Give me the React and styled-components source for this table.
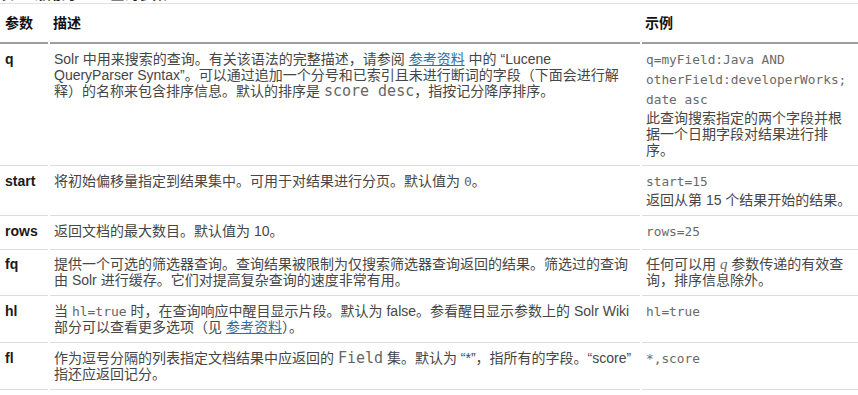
import React from "react";
import styled, { createGlobalStyle } from "styled-components";

const GlobalStyle = createGlobalStyle`
  html, body { margin: 0; padding: 0; background: #fff; }
  body {
    font-family: "Liberation Sans", Arial, "Noto Sans CJK SC", sans-serif;
    font-size: 14px;
    color: #444;
  }
`;

const Page = styled.div`
  width: 858px;
  overflow: hidden;
`;

const Caption = styled.div`
  height: 3px;
  overflow: hidden;
  border-bottom: 1px solid #e2e2e2;
`;

const CaptionText = styled.div`
  margin-top: -14px;
  line-height: 16px;
  font-weight: bold;
  color: #222;
  white-space: nowrap;
`;

const Table = styled.table`
  border-collapse: separate;
  border-spacing: 2px 0;
  table-layout: fixed;
  width: 862px;
  margin: 0 -2px;
`;

const HeadCell = styled.th`
  box-sizing: border-box;
  width: ${(p) => p.$w || "auto"};
  padding: 11px 4px 11px ${(p) => (p.$first ? "5px" : "3px")};
  border-bottom: 2px solid #9e9e9e;
  text-align: left;
  font-weight: bold;
  font-size: 14px;
  line-height: 16px;
  color: #111;
`;

const LabelCell = styled.td`
  box-sizing: border-box;
  padding: 6px 2px 7px 5px;
  border-bottom: 1px solid #dcdcdc;
  vertical-align: baseline;
  font-weight: bold;
  line-height: 16px;
  color: #1a1a1a;
`;

const Cell = styled.td`
  box-sizing: border-box;
  padding: 6px ${(p) => (p.$example ? "4px" : "8px")} 7px 4px;
  border-bottom: 1px solid #dcdcdc;
  vertical-align: baseline;
  line-height: 16px;
  color: #464646;
`;

const ExampleCode = styled.div`
  font-family: "DejaVu Sans Mono", monospace;
  font-size: 12.8px;
  line-height: 20px;
  color: #6a6a6a;
`;

const Note = styled.div`
  line-height: 16px;
`;

const Code = styled.code`
  font-family: "DejaVu Sans Mono", monospace;
  font-size: ${(p) => (p.$wide ? "15px" : "13px")};
  line-height: 14px;
  color: #666;
`;

const Link = styled.a`
  color: #2f6e9e;
  text-decoration: underline;
`;

const Var = styled.em`
  font-family: "Liberation Serif", serif;
  font-size: 15px;
  line-height: 14px;
  color: #666;
`;

const rows = [
  {
    name: "q",
    desc: (
      <>
        Solr 中用来搜索的查询。有关该语法的完整描述，请参阅 <Link href="#r">参考资料</Link> 中的 “Lucene QueryParser
        Syntax”。可以通过追加一个分号和已索引且未进行断词的字段（下面会进行解释）的名称来包含排序信息。默认的排序是{" "}
        <Code $wide>score desc</Code>，指按记分降序排序。
      </>
    ),
    code: "q=myField:Java AND otherField:developerWorks; date asc",
    note: "此查询搜索指定的两个字段并根据一个日期字段对结果进行排序。",
  },
  {
    name: "start",
    desc: (
      <>
        将初始偏移量指定到结果集中。可用于对结果进行分页。默认值为 <Code>0</Code>。
      </>
    ),
    code: "start=15",
    note: "返回从第 15 个结果开始的结果。",
  },
  {
    name: "rows",
    desc: "返回文档的最大数目。默认值为 10。",
    code: "rows=25",
  },
  {
    name: "fq",
    desc: "提供一个可选的筛选器查询。查询结果被限制为仅搜索筛选器查询返回的结果。筛选过的查询由 Solr 进行缓存。它们对提高复杂查询的速度非常有用。",
    note: (
      <>
        任何可以用 <Var>q</Var> 参数传递的有效查询，排序信息除外。
      </>
    ),
  },
  {
    name: "hl",
    desc: (
      <>
        当 <Code>hl=true</Code> 时，在查询响应中醒目显示片段。默认为 false。参看醒目显示参数上的 Solr Wiki
        部分可以查看更多选项（见 <Link href="#r">参考资料</Link>）。
      </>
    ),
    code: "hl=true",
  },
  {
    name: "fl",
    desc: (
      <>
        作为逗号分隔的列表指定文档结果中应返回的 <Code $wide>Field</Code> 集。默认为 “*”，指所有的字段。“score”
        指还应返回记分。
      </>
    ),
    code: "*,score",
  },
];

export default function App() {
  return (
    <Page>
      <GlobalStyle />
      <Caption>
        <CaptionText>表 1. 常用的 Solr 查询参数</CaptionText>
      </Caption>
      <Table>
        <thead>
          <tr>
            <HeadCell $w="48px" $first>参数</HeadCell>
            <HeadCell $w="590px">描述</HeadCell>
            <HeadCell>示例</HeadCell>
          </tr>
        </thead>
        <tbody>
          {rows.map((r) => (
            <tr key={r.name}>
              <LabelCell>{r.name}</LabelCell>
              <Cell>{r.desc}</Cell>
              <Cell $example>
                {r.code && <ExampleCode>{r.code}</ExampleCode>}
                {r.note && <Note>{r.note}</Note>}
              </Cell>
            </tr>
          ))}
        </tbody>
      </Table>
    </Page>
  );
}
